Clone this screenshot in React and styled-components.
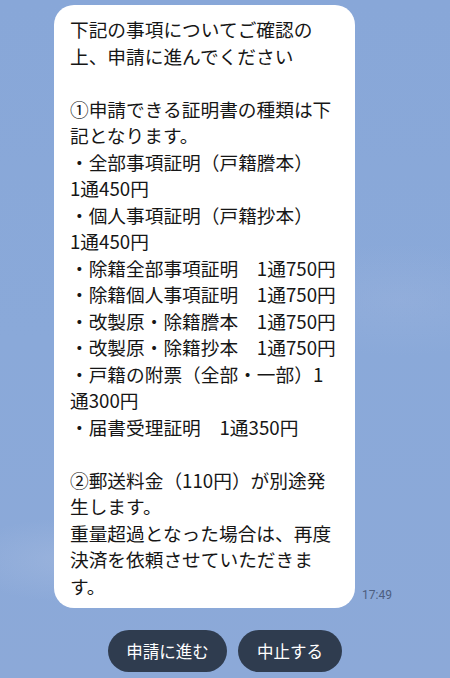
import React from "react";
import styled, { createGlobalStyle } from "styled-components";

const Global = createGlobalStyle`
  html, body { margin: 0; padding: 0; }
  body {
    width: 450px;
    height: 678px;
    overflow: hidden;
    font-family: "Noto Sans CJK JP", "Noto Sans", Roboto, sans-serif;
  }
`;

const Screen = styled.div`
  width: 450px;
  height: 678px;
  box-sizing: border-box;
  padding-top: 5px;
  background:
    radial-gradient(ellipse 160px 60px at 70px 560px, rgba(170, 190, 225, 0.45), transparent 70%),
    radial-gradient(ellipse 200px 80px at 400px 300px, rgba(160, 182, 222, 0.35), transparent 70%),
    linear-gradient(180deg, #88a7d8 0%, #8aa9d9 50%, #8ca9d8 100%);
  display: flex;
  flex-direction: column;
  align-items: center;
`;

const MessageRow = styled.div`
  width: 100%;
  box-sizing: border-box;
  padding-left: 54px;
  display: flex;
  align-items: flex-end;
  gap: 7px;
`;

const Bubble = styled.div`
  width: 301px;
  box-sizing: border-box;
  background: #ffffff;
  border-radius: 20px;
  padding: 11px 12px 9px 16px;
  color: #161616;
  font-size: 18.7px;
  line-height: 26.5px;
  letter-spacing: 0;
`;

const Line = styled.div`
  white-space: pre;
  min-height: 26.5px;
`;

const Time = styled.span`
  font-family: Roboto, "Noto Sans", sans-serif;
  font-size: 12px;
  color: #4d5e7f;
  margin-bottom: 6px;
`;

const Actions = styled.div`
  margin-top: 22px;
  display: flex;
  gap: 11px;
`;

const ActionButton = styled.button`
  height: 42px;
  width: ${(p) => p.$w}px;
  border: none;
  border-radius: 21px;
  background: #2f3c4f;
  color: #ffffff;
  font-family: "Noto Sans CJK JP", sans-serif;
  font-size: 16.5px;
  padding: 0;
`;

const lines = [
  "下記の事項についてご確認の",
  "上、申請に進んでください",
  "",
  "①申請できる証明書の種類は下",
  "記となります。",
  "・全部事項証明（戸籍謄本）",
  "1通450円",
  "・個人事項証明（戸籍抄本）",
  "1通450円",
  "・除籍全部事項証明　1通750円",
  "・除籍個人事項証明　1通750円",
  "・改製原・除籍謄本　1通750円",
  "・改製原・除籍抄本　1通750円",
  "・戸籍の附票（全部・一部）1",
  "通300円",
  "・届書受理証明　1通350円",
  "",
  "②郵送料金（110円）が別途発",
  "生します。",
  "重量超過となった場合は、再度",
  "決済を依頼させていただきま",
  "す。",
];

export default function App() {
  return (
    <>
      <Global />
      <Screen>
        <MessageRow>
          <Bubble>
            {lines.map((l, i) => (
              <Line key={i}>{l}</Line>
            ))}
          </Bubble>
          <Time>17:49</Time>
        </MessageRow>
        <Actions>
          <ActionButton $w={119}>申請に進む</ActionButton>
          <ActionButton $w={104}>中止する</ActionButton>
        </Actions>
      </Screen>
    </>
  );
}
